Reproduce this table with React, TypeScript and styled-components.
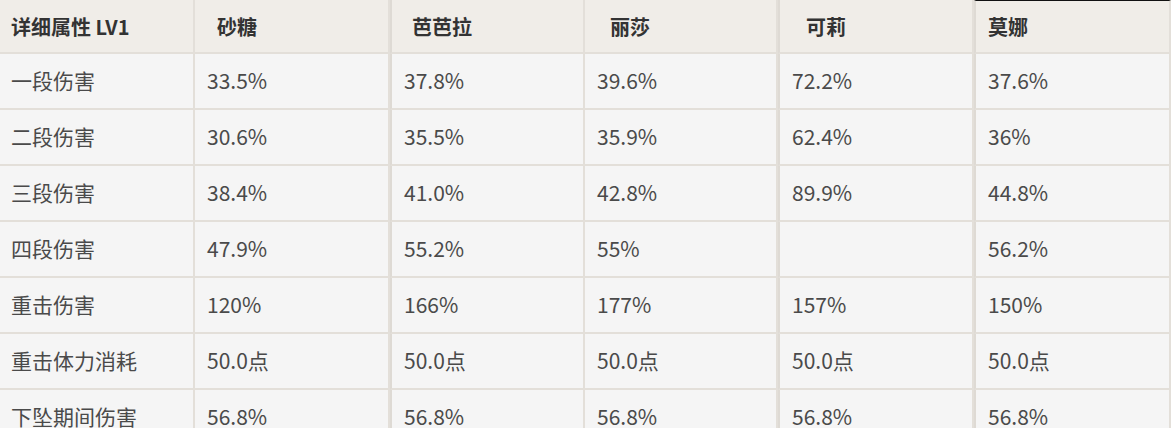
import React from 'react';
import styled, { createGlobalStyle } from 'styled-components';

const GlobalStyle = createGlobalStyle`
  html, body {
    margin: 0;
    padding: 0;
    background: #f5f5f5;
    overflow: hidden;
  }
`;

interface Column {
  name: string;
  width: number;
  headIndent: number;
  seam?: boolean;
  topLine?: boolean;
}

const columns: Column[] = [
  { name: '详细属性 LV1', width: 195, headIndent: 11 },
  { name: '砂糖', width: 195, headIndent: 22 },
  { name: '芭芭拉', width: 195, headIndent: 20, seam: true },
  { name: '丽莎', width: 193, headIndent: 25 },
  { name: '可莉', width: 196, headIndent: 26, seam: true },
  { name: '莫娜', width: 197, headIndent: 12, seam: true, topLine: true },
];

const rows: string[][] = [
  ['一段伤害', '33.5%', '37.8%', '39.6%', '72.2%', '37.6%'],
  ['二段伤害', '30.6%', '35.5%', '35.9%', '62.4%', '36%'],
  ['三段伤害', '38.4%', '41.0%', '42.8%', '89.9%', '44.8%'],
  ['四段伤害', '47.9%', '55.2%', '55%', '', '56.2%'],
  ['重击伤害', '120%', '166%', '177%', '157%', '150%'],
  ['重击体力消耗', '50.0点', '50.0点', '50.0点', '50.0点', '50.0点'],
  ['下坠期间伤害', '56.8%', '56.8%', '56.8%', '56.8%', '56.8%'],
];

const Table = styled.div<{ $template: string }>`
  display: grid;
  grid-template-columns: ${({ $template }) => $template};
  grid-auto-rows: 56px;
  grid-template-rows: 54px;
  width: 1171px;
  font-family: "Noto Sans CJK SC", "Noto Sans", sans-serif;
`;

interface CellProps {
  $seam?: boolean;
  $indent?: number;
  $topLine?: boolean;
}

const Cell = styled.div<CellProps>`
  display: flex;
  align-items: center;
  box-sizing: border-box;
  padding-left: ${({ $indent }) => $indent ?? 11}px;
  padding-bottom: 3px;
  border-right: 2px solid #e3dfd9;
  border-bottom: 2px solid #e3dfd9;
  border-left: ${({ $seam }) => ($seam ? '2px solid #dedad4' : 'none')};
  background: #f5f5f5;
  color: #4a4a4a;
  font-size: 21px;
  white-space: nowrap;
`;

const HeadCell = styled(Cell)`
  background: #f0ede8;
  color: #333;
  font-weight: 700;
  font-size: 20px;
  padding-bottom: 0;
  border-top: ${({ $topLine }) => ($topLine ? '1px solid #111' : 'none')};
`;

export default function App() {
  const template = columns.map((c) => `${c.width}px`).join(' ');

  return (
    <>
      <GlobalStyle />
      <Table $template={template}>
        {columns.map((col) => (
          <HeadCell
            key={col.name}
            $seam={col.seam}
            $indent={col.headIndent}
            $topLine={col.topLine}
          >
            {col.name}
          </HeadCell>
        ))}
        {rows.map((row, r) =>
          row.map((value, c) => (
            <Cell
              key={`${r}_${c}`}
              $seam={columns[c].seam}
              $indent={c === 0 ? 11 : 12}
            >
              {value}
            </Cell>
          ))
        )}
      </Table>
    </>
  );
}
